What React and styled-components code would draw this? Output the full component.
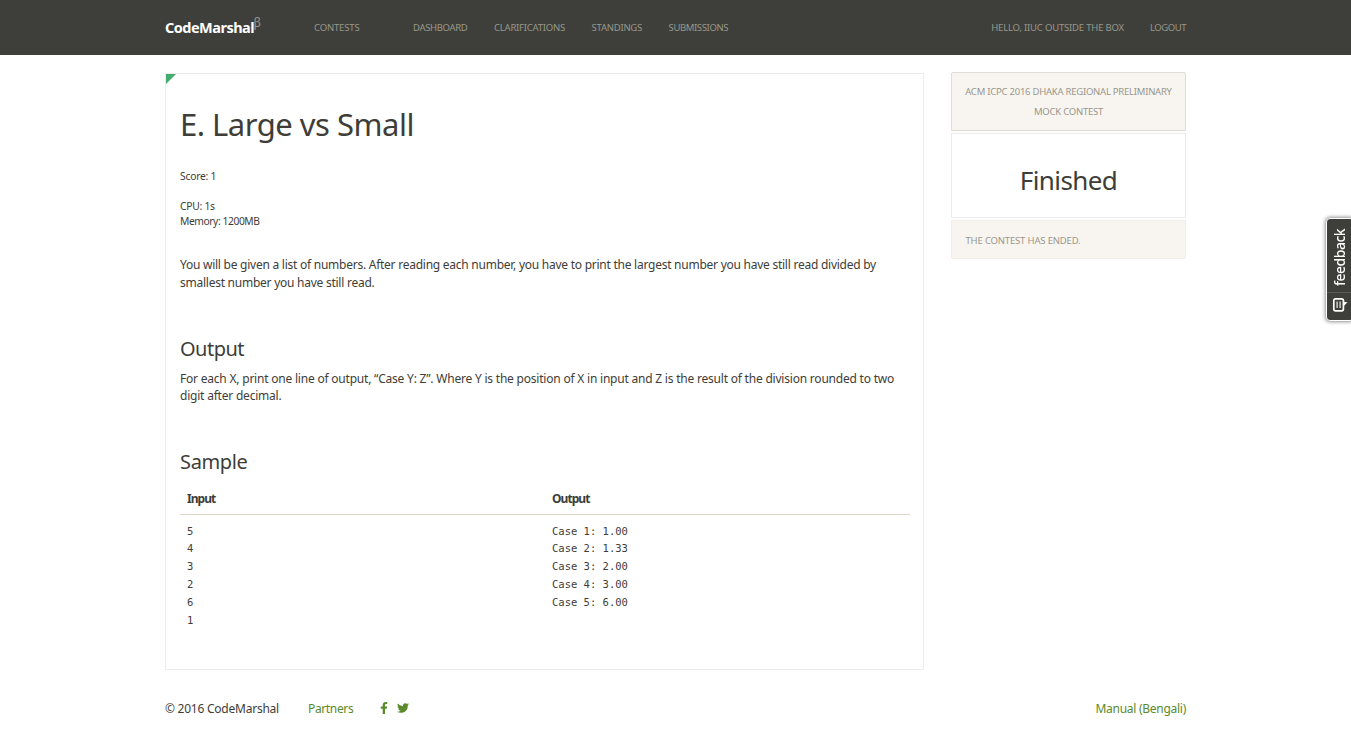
import React from "react";
import styled, { createGlobalStyle } from "styled-components";
import { FaFacebookF, FaTwitter } from "react-icons/fa";

const GlobalStyle = createGlobalStyle`
  * { box-sizing: border-box; }
  body {
    margin: 0;
    background: #fff;
    color: #3e3d38;
    font-family: "Noto Sans", "Open Sans", sans-serif;
    font-size: 12px;
    line-height: 17.86px;
    overflow: hidden;
  }
`;

const Container = styled.div`
  width: 1021px;
  margin: 0 auto;
`;

const Header = styled.header`
  height: 55px;
  background: #3e3f3a;
`;

const HeaderInner = styled(Container)`
  height: 100%;
  display: flex;
  align-items: center;
`;

const Brand = styled.a`
  display: flex;
  width: 149px;
  color: #fff;
  font-size: 14.5px;
  font-weight: 700;
  letter-spacing: -0.52px;
`;

const Beta = styled.sup`
  color: #98978b;
  font-size: 12px;
  font-weight: 400;
  line-height: 1;
  margin: -2px 0 0 -0.5px;
`;

const Nav = styled.nav`
  display: flex;
  align-items: center;
  gap: ${(p) => (p.$end ? 26 : 26.6)}px;
  margin-left: ${(p) => (p.$end ? "auto" : "0")};
`;

const NavLink = styled.a`
  color: #98978b;
  font-size: 9.5px;
  text-transform: uppercase;
  white-space: nowrap;
  letter-spacing: ${(p) => p.$track || -0.2}px;
  margin-right: ${(p) => p.$after || 0}px;
`;

const Body = styled(Container)`
  display: flex;
  justify-content: space-between;
  align-items: flex-start;
  padding-top: 17px;
`;

const Problem = styled.main`
  position: relative;
  width: 759px;
  height: 597px;
  margin-top: 1px;
  padding: 30px 13px 0 14px;
  border: 1px solid #ececec;
`;

const Corner = styled.span`
  position: absolute;
  top: 0;
  left: 0;
  width: 10px;
  height: 10px;
  background: #42ab6d;
  clip-path: polygon(0 0, 100% 0, 0 100%);
`;

const Title = styled.h1`
  margin: 0;
  font-size: 31px;
  font-weight: 400;
  line-height: 40px;
  letter-spacing: -0.5px;
`;

const Limits = styled.div`
  margin-top: 24.5px;
  font-size: 10.3px;
  line-height: 15px;
`;

const Limit = styled.div`
  letter-spacing: ${(p) => p.$track}px;
  margin-bottom: ${(p) => (p.$spaced ? 15 : 0)}px;
`;

const Paragraph = styled.p`
  margin: ${(p) => p.$top}px 0 0;
  letter-spacing: ${(p) => p.$track}px;
  white-space: nowrap;
`;

const Heading = styled.h2`
  margin: ${(p) => p.$top}px 0 0;
  font-size: 20px;
  font-weight: 400;
  line-height: 24px;
  letter-spacing: ${(p) => p.$track}px;
`;

const SampleHead = styled.div`
  display: grid;
  grid-template-columns: 1fr 1fr;
  margin-top: 7.3px;
  padding: 8.3px 0 6.7px;
  border-bottom: 1px solid #dfd7ca;
  font-weight: 700;
  letter-spacing: -0.95px;
`;

const SampleBody = styled.div`
  display: grid;
  grid-template-columns: 1fr 1fr;
  padding-top: 7.5px;
`;

const Cell = styled.div`
  padding-left: 7px;
`;

const Code = styled.pre`
  margin: 0;
  padding-left: 7px;
  font-family: "DejaVu Sans Mono", monospace;
  font-size: 10.5px;
`;

const Sidebar = styled.aside`
  width: 235px;
  display: flex;
  flex-direction: column;
  gap: 2px;
`;

const ContestName = styled.div`
  height: 59px;
  padding: 9px 0;
  border: 1px solid #dfdcd8;
  border-radius: 2px 2px 0 0;
  background: #f8f5f0;
  color: #98978b;
  font-size: 9.5px;
  line-height: 20px;
  letter-spacing: -0.24px;
  text-align: center;
`;

const Status = styled.div`
  height: 85px;
  display: flex;
  align-items: center;
  justify-content: center;
  padding-top: 9px;
  border: 1px solid #ececec;
  font-size: 26px;
  line-height: 30px;
  letter-spacing: -0.6px;
`;

const StatusNote = styled.div`
  height: 39px;
  display: flex;
  align-items: center;
  padding: 3px 13.5px 0;
  border: 1px solid #f0edea;
  border-radius: 0 0 2px 2px;
  background: #f8f5f0;
  color: #98978b;
  font-size: 9.5px;
  letter-spacing: -0.17px;
`;

const Footer = styled.footer`
  display: flex;
  align-items: center;
  width: 1021px;
  margin: 29.5px auto 0;
`;

const Copyright = styled.span`
  width: 143px;
  letter-spacing: -0.24px;
`;

const FooterLink = styled.a`
  color: #5a8a2c;
  letter-spacing: ${(p) => p.$track}px;
  margin-left: ${(p) => (p.$end ? "auto" : "0")};
`;

const Social = styled.span`
  display: flex;
  align-items: center;
  gap: 7px;
  margin: -1px 0 0 24.5px;
  color: #5a8a2c;
`;

const Feedback = styled.button`
  position: fixed;
  top: 218px;
  right: -3px;
  width: 28px;
  height: 103px;
  display: flex;
  flex-direction: column;
  align-items: flex-start;
  padding: 0;
  border: 1.5px solid #fff;
  border-radius: 4px;
  background: #3e3f3a;
  box-shadow: 0 0 4px rgba(0, 0, 0, 0.65);
  color: #fff;
  overflow: hidden;
`;

const FeedbackLabel = styled.span`
  width: 24px;
  height: 74px;
  display: flex;
  align-items: center;
  justify-content: flex-start;
  padding-top: 5.5px;
  writing-mode: vertical-rl;
  transform: rotate(180deg);
  border-top: 1px solid #5b5c58;
  font: 500 14px "Noto Sans", sans-serif;
  letter-spacing: -0.5px;
`;

const NoteIcon = styled.svg`
  margin: 4px 0 0 5px;
  display: block;
`;

export default function App() {
  return (
    <>
      <GlobalStyle />
      <Header>
        <HeaderInner>
          <Brand>
            CodeMarshal<Beta>β</Beta>
          </Brand>
          <Nav>
            <NavLink $track={-0.16} $after={27}>Contests</NavLink>
            <NavLink $track={-0.34}>Dashboard</NavLink>
            <NavLink $track={-0.22}>Clarifications</NavLink>
            <NavLink $track={-0.25}>Standings</NavLink>
            <NavLink $track={-0.38}>Submissions</NavLink>
          </Nav>
          <Nav $end>
            <NavLink $track={-0.19}>Hello, IIUC Outside The Box</NavLink>
            <NavLink $track={-0.45}>Logout</NavLink>
          </Nav>
        </HeaderInner>
      </Header>

      <Body>
        <Problem>
          <Corner />
          <Title>E. Large vs Small</Title>
          <Limits>
            <Limit $track={-0.22} $spaced>Score: 1</Limit>
            <Limit $track={-0.25}>CPU: 1s</Limit>
            <Limit $track={-0.43}>Memory: 1200MB</Limit>
          </Limits>
          <Paragraph $top={27.4} $track={-0.25}>
            You will be given a list of numbers. After reading each number, you have to print the largest number you have still read divided by
            <br />
            smallest number you have still read.
          </Paragraph>
          <Heading $top={45.3} $track={-0.5}>Output</Heading>
          <Paragraph $top={8.7} $track={-0.21}>
            For each X, print one line of output, “Case Y: Z”. Where Y is the position of X in input and Z is the result of the division rounded to two
            <br />
            digit after decimal.
          </Paragraph>
          <Heading $top={44.6} $track={-0.35}>Sample</Heading>
          <SampleHead>
            <Cell>Input</Cell>
            <Cell>Output</Cell>
          </SampleHead>
          <SampleBody>
            <Code>{"5\n4\n3\n2\n6\n1"}</Code>
            <Code>{"Case 1: 1.00\nCase 2: 1.33\nCase 3: 2.00\nCase 4: 3.00\nCase 5: 6.00"}</Code>
          </SampleBody>
        </Problem>

        <Sidebar>
          <ContestName>
            ACM ICPC 2016 DHAKA REGIONAL PRELIMINARY
            <br />
            MOCK CONTEST
          </ContestName>
          <Status>Finished</Status>
          <StatusNote>THE CONTEST HAS ENDED.</StatusNote>
        </Sidebar>
      </Body>

      <Footer>
        <Copyright>© 2016 CodeMarshal</Copyright>
        <FooterLink $track={-0.36}>Partners</FooterLink>
        <Social>
          <FaFacebookF size={12} />
          <FaTwitter size={12} />
        </Social>
        <FooterLink $track={-0.27} $end>Manual (Bengali)</FooterLink>
      </Footer>

      <Feedback>
        <FeedbackLabel>feedback</FeedbackLabel>
        <NoteIcon width="17" height="16" viewBox="0 0 17 16" fill="none" stroke="#fff">
          <rect x="1.8" y="1.8" width="9.6" height="12" rx="1.8" strokeWidth="1.7" />
          <path d="M11.5 4.8 L15.5 5.3 L11.5 9.2 Z" fill="#fff" stroke="none" />
          <path d="M5.1 4.6 V11 M8.1 4.6 V11" strokeWidth="1.1" />
        </NoteIcon>
      </Feedback>
    </>
  );
}
